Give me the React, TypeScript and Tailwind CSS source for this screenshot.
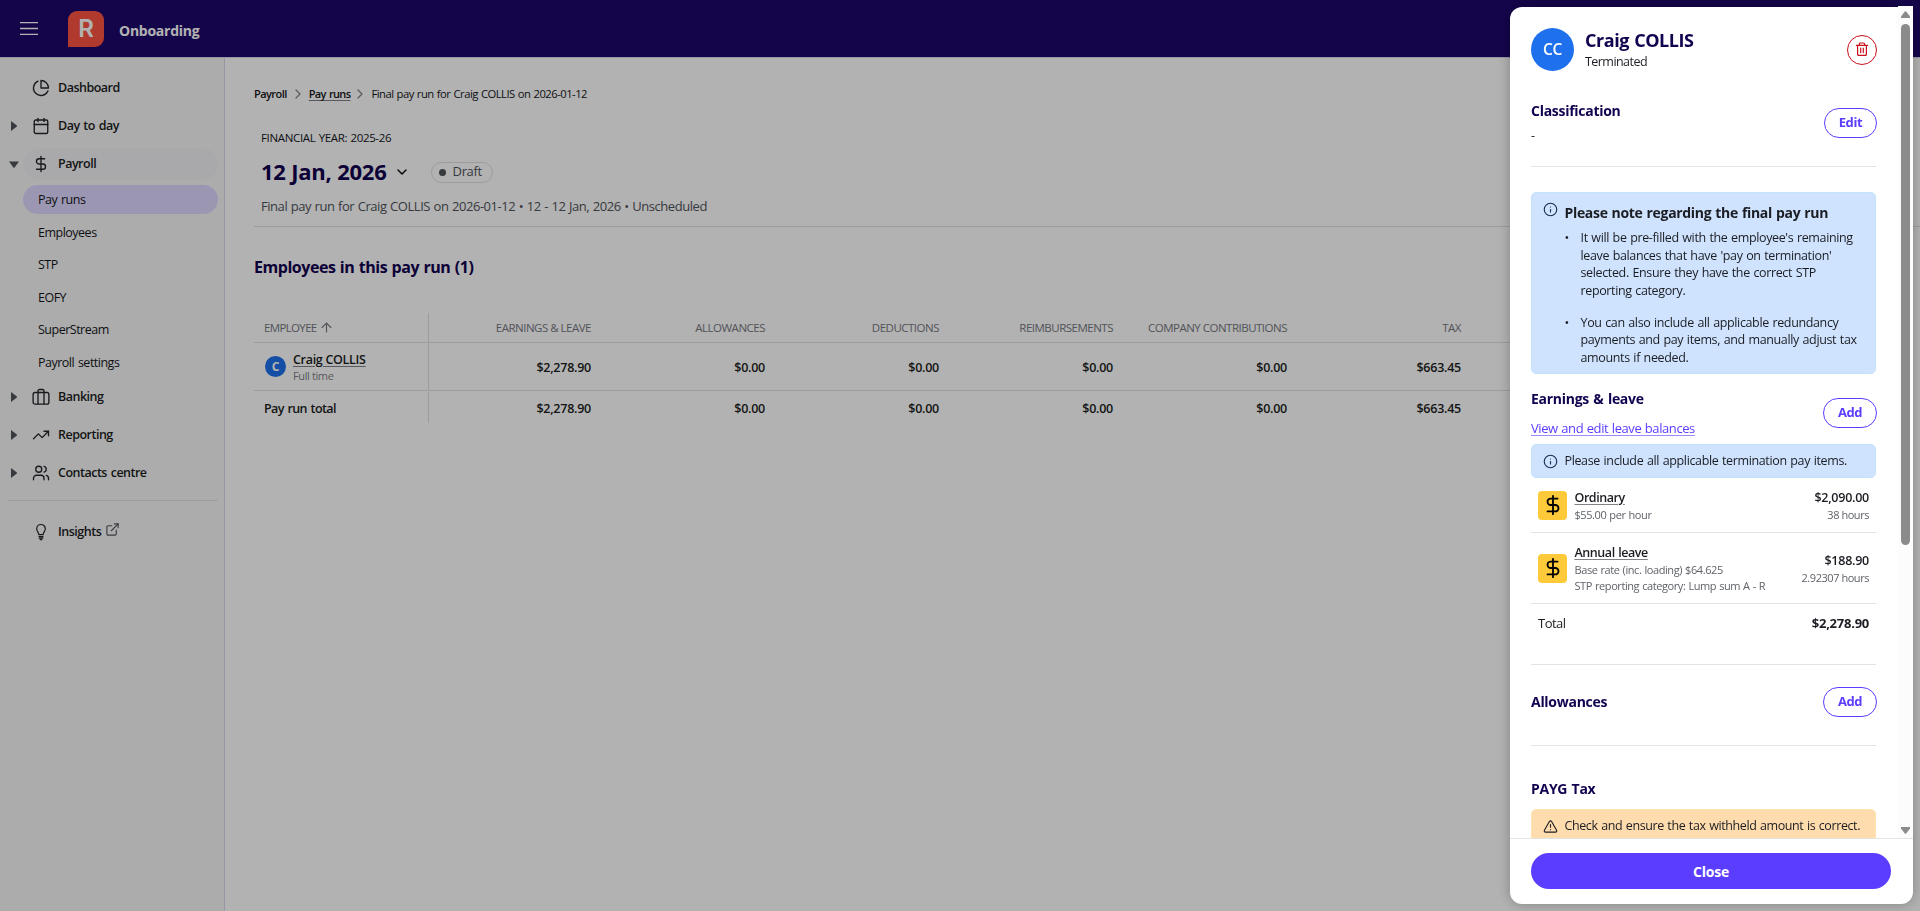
import type { ReactNode } from 'react';
import {
  ArrowUp,
  Calendar,
  ChevronDown,
  ChevronRight,
  DollarSign,
  ExternalLink,
  Info,
  TrendingUp,
  TriangleAlert,
  Users
} from 'lucide-react';

const PieIcon = () => (
  <svg viewBox="0 0 24 24" className="size-[18px]" fill="none" stroke="currentColor" strokeWidth={1.8} strokeLinecap="round" strokeLinejoin="round">
    <path d="M21.21 15.89A10 10 0 1 1 8 2.83" />
    <path d="M22 12A10 10 0 0 0 12 2v10z" />
  </svg>
);

const BankIcon = () => (
  <svg viewBox="0 0 24 24" className="size-[18px]" fill="none" stroke="currentColor" strokeWidth={1.8} strokeLinejoin="round">
    <rect x="1.5" y="6" width="21" height="15.5" rx="2.5" />
    <path d="M8 21.5V4a2 2 0 0 1 2-2h4a2 2 0 0 1 2 2v17.5" />
  </svg>
);

const BulbIcon = () => (
  <svg viewBox="0 0 18 18" className="size-[18px]" fill="none" stroke="currentColor" strokeWidth={1.2} strokeLinecap="round" strokeLinejoin="round">
    <path d="M6.9 11.7C6.9 9.6 4.7 8.6 4.7 5.8a4.3 4.3 0 0 1 8.6 0c0 2.8-2.2 3.8-2.2 5.9z" />
    <path d="M7 13.6h4M7.2 15.2h3.6M8.2 16.7h1.6" />
  </svg>
);

const TrashIcon = () => (
  <svg viewBox="0 0 14 14" className="mb-[2px] size-[14px]" fill="none" stroke="currentColor" strokeWidth={1.2} strokeLinecap="round" strokeLinejoin="round">
    <path d="M1.4 3.4h11.2M4.4 3.2V2a1 1 0 0 1 1-1h3.2a1 1 0 0 1 1 1v1.2M2.6 3.4v8.8a1.1 1.1 0 0 0 1.1 1.1h6.6a1.1 1.1 0 0 0 1.1-1.1V3.4M5.7 6.2v4.4M8.3 6.2v4.4" />
  </svg>
);

const payrollLinks = ['Pay runs', 'Employees', 'STP', 'EOFY', 'SuperStream', 'Payroll settings'];

const columns = [
  { label: 'Earnings & leave', value: '$2,278.90' },
  { label: 'Allowances', value: '$0.00' },
  { label: 'Deductions', value: '$0.00' },
  { label: 'Reimbursements', value: '$0.00' },
  { label: 'Company contributions', value: '$0.00' },
  { label: 'Tax', value: '$663.45' }
];

const notes = [
  [
    "It will be pre-filled with the employee's remaining",
    "leave balances that have 'pay on termination'",
    'selected. Ensure they have the correct STP',
    'reporting category.'
  ],
  [
    'You can also include all applicable redundancy',
    'payments and pay items, and manually adjust tax',
    'amounts if needed.'
  ]
];

const Caret = ({ open }: { open?: boolean }) => (
  <svg viewBox="0 0 10 10" className="size-[10px] text-[#50535a]" fill="currentColor">
    {open ? <path d="M0 2.5h10L5.6 8.4a.8.8 0 0 1-1.2 0z" /> : <path d="M2 0v10l5.6-4.3a.9.9 0 0 0 0-1.4z" />}
  </svg>
);

interface NavItemProps {
  icon: ReactNode;
  label: string;
  caret?: boolean;
  open?: boolean;
  children?: ReactNode;
}

const NavItem = ({ icon, label, caret, open, children }: NavItemProps) => (
  <div className="flex h-8 items-center">
    <div className="flex w-[23px] justify-center pl-[5px]">{caret && <Caret open={open} />}</div>
    <div className={`flex h-8 w-[195px] items-center rounded-full pl-[9px] ${open ? 'bg-[#f2f2f5]' : ''}`}>
      <span className="flex w-[26px] text-[#23262b]">{icon}</span>
      <span className="pt-px text-[12.5px] font-semibold tracking-[-0.5px] text-[#1b1d22] [word-spacing:1px]">{label}</span>
      {children}
    </div>
  </div>
);

const Sidebar = () => (
  <aside className="h-[853px] w-[225px] shrink-0 border-r border-[#dbd8ea] bg-[#f7f7f8] pt-[14px]">
    <nav className="flex flex-col gap-[6px]">
      <NavItem icon={<PieIcon />} label="Dashboard" />
      <NavItem icon={<Calendar size={18} strokeWidth={1.8} />} label="Day to day" caret />
      <NavItem icon={<DollarSign size={18} strokeWidth={1.8} />} label="Payroll" caret open />
    </nav>
    <ul className="mt-[5px] ml-[23px] flex w-[195px] flex-col gap-[3.5px]">
      {payrollLinks.map((link, i) => (
        <li
          key={link}
          className={`flex h-[29px] items-center rounded-full pt-[2px] pl-[15px] text-[12.5px] tracking-[-0.5px] text-[#14161a] [word-spacing:1px] ${i === 0 ? 'bg-[#dfd9ff]' : ''}`}
        >
          {link}
        </li>
      ))}
    </ul>
    <nav className="mt-1 flex flex-col gap-[6px]">
      <NavItem icon={<BankIcon />} label="Banking" caret />
      <NavItem icon={<TrendingUp size={18} strokeWidth={1.8} />} label="Reporting" caret />
      <NavItem icon={<Users size={18} strokeWidth={1.8} />} label="Contacts centre" caret />
    </nav>
    <div className="mt-[11px] mr-[6px] mb-[15px] ml-[7px] border-t border-[#e3e3e6]" />
    <NavItem icon={<BulbIcon />} label="Insights">
      <ExternalLink size={15} strokeWidth={1.8} className="mb-1 ml-1 text-[#50535a]" />
    </NavItem>
  </aside>
);

const AmountCell = ({ children }: { children: ReactNode }) => (
  <div className="w-[174px] pt-[3px] pr-[12px] text-right text-[12.5px] font-semibold tracking-[-0.25px]">{children}</div>
);

const PayRunTable = () => (
  <div className="mt-9 w-[1560px] text-[12.5px] text-[#1b1d22]">
    <div className="flex h-[30px] items-center border-b border-[#e0e0e3] text-[11.5px] tracking-[-0.5px] text-[#76787f] uppercase">
      <div className="flex h-full w-[175px] items-center gap-[2px] border-r border-[#e0e0e3] pl-[10px]">
        <span className="pt-px tracking-[-0.65px]">Employee</span>
        <ArrowUp size={15} strokeWidth={1.8} />
      </div>
      {columns.map((col) => (
        <div key={col.label} className="w-[174px] pt-px pr-[12px] text-right">{col.label}</div>
      ))}
    </div>
    <div className="flex h-12 items-center border-b border-[#e0e0e3]">
      <div className="flex h-full w-[175px] items-center gap-[7px] border-r border-[#e0e0e3] pl-[11px]">
        <span className="flex size-[21px] items-center justify-center rounded-full bg-[#1f70ec] text-[12px] font-bold text-white">C</span>
        <div className="pt-[3px] leading-[16px]">
          <div className="font-semibold tracking-[-0.3px] underline decoration-[#808288] underline-offset-2">Craig COLLIS</div>
          <div className="text-[11px] tracking-[-0.38px] text-[#808288]">Full time</div>
        </div>
      </div>
      {columns.map((col) => (
        <AmountCell key={col.label}>{col.value}</AmountCell>
      ))}
    </div>
    <div className="flex h-8 items-center pt-px">
      <div className="flex h-full w-[175px] items-center border-r border-[#e0e0e3] pt-[3px] pl-[10px] font-semibold tracking-[-0.6px] [word-spacing:1px]">
        Pay run total
      </div>
      {columns.map((col) => (
        <AmountCell key={col.label}>{col.value}</AmountCell>
      ))}
    </div>
  </div>
);

const SectionTitle = ({ children }: { children: ReactNode }) => (
  <h3 className="text-[14px] leading-5 font-bold tracking-[-0.28px] text-[#12024f] [word-spacing:1px]">{children}</h3>
);

const OutlineButton = ({ label, className }: { label: string; className: string }) => (
  <button className={`h-[30px] shrink-0 rounded-full border border-[#5a3dff] text-[13px] font-bold tracking-[-0.4px] text-[#5a3dff] ${className}`}>
    {label}
  </button>
);

interface PayItemProps {
  name: string;
  lines: string[];
  amount: string;
  hours: string;
  className: string;
}

const PayItem = ({ name, lines, amount, hours, className }: PayItemProps) => (
  <div className={`flex items-center border-b border-[#e3e3e6] px-[7px] text-[11px] leading-[15.5px] text-[#5f6269] ${className}`}>
    <span className="flex size-[29px] shrink-0 items-center justify-center rounded bg-[#ffca3a] text-black">
      <DollarSign size={22} />
    </span>
    <div className="ml-[7.5px] grow pt-px tracking-[-0.42px] [word-spacing:0.6px]">
      <div className="text-[12.5px] leading-[18px] font-semibold tracking-[-0.43px] text-[#1b1d22] underline decoration-[#808288] underline-offset-2">{name}</div>
      {lines.map((line) => (
        <div key={line}>{line}</div>
      ))}
    </div>
    <div className="pt-[2px] text-right tracking-[-0.45px]">
      <div className="text-[12.5px] leading-[18px] font-semibold tracking-[-0.25px] text-[#1b1d22]">{amount}</div>
      <div>{hours}</div>
    </div>
  </div>
);

const Drawer = () => (
  <div className="fixed top-[7px] right-[7px] bottom-[7px] flex w-[403px] flex-col rounded-xl bg-white text-[#1b1d22] shadow-[0_0_14px_rgba(0,0,0,0.28)]">
    <div className="flex h-[831px] shrink-0">
      <div className="h-full w-[388px] overflow-hidden rounded-tl-xl pt-[21px] pr-[22px] pl-[21px] whitespace-nowrap">
        <div className="flex h-[43px] items-center">
          <span className="flex size-[43px] items-center justify-center rounded-full bg-[#1f70ec] text-[15.5px] font-semibold tracking-[-0.4px] text-white">CC</span>
          <div className="ml-[11px] grow pb-px">
            <div className="text-[18px] leading-[25px] font-bold tracking-[-0.45px] text-[#12024f] [word-spacing:1px]">Craig COLLIS</div>
            <div className="text-[12.5px] leading-[18px] tracking-[-0.55px]">Terminated</div>
          </div>
          <button className="-mr-px flex size-[30px] items-center justify-center rounded-full border border-[#c8101c] text-[#c8101c]">
            <TrashIcon />
          </button>
        </div>

        <div className="mt-[30px] flex h-[66px] items-start justify-between border-b border-[#e3e3e6]">
          <div>
            <SectionTitle>Classification</SectionTitle>
            <p className="mt-[5px] text-[12.5px] leading-5">-</p>
          </div>
          <OutlineButton label="Edit" className="mt-[7px] -mr-px w-[53px]" />
        </div>

        <div className="mt-[25px] flex h-[182px] rounded-[5px] border border-[#c3e3fb] bg-[#cfe3ff] pt-[10px] pl-[11px]">
          <Info size={15} strokeWidth={1.8} className="-mt-px shrink-0 text-[#16324f]" />
          <div className="ml-[6.5px] text-[12.5px] leading-[17.67px] tracking-[-0.36px] [word-spacing:0.7px]">
            <h4 className="text-[14px] leading-5 font-bold tracking-[-0.32px]">Please note regarding the final pay run</h4>
            <ul className="mt-[6px] flex flex-col gap-[14px]">
              {notes.map((note) => (
                <li key={note[0]} className="flex">
                  <span className="w-4">•</span>
                  <div>
                    {note.map((line) => (
                      <div key={line}>{line}</div>
                    ))}
                  </div>
                </li>
              ))}
            </ul>
          </div>
        </div>

        <div className="mt-[15px] flex h-[55px] items-start justify-between">
          <div>
            <SectionTitle>Earnings & leave</SectionTitle>
            <a className="mt-[9px] block text-[13px] leading-5 tracking-[-0.42px] text-[#5a3dff] underline decoration-[#9c8aff] underline-offset-2 [word-spacing:0.6px]">
              View and edit leave balances
            </a>
          </div>
          <OutlineButton label="Add" className="mt-[9px] -mr-px w-[54px]" />
        </div>
        <div className="flex h-[34px] items-center rounded-[5px] border border-[#c3e3fb] bg-[#cfe3ff] pl-[11px] text-[12.5px] tracking-[-0.36px] [word-spacing:0.7px]">
          <Info size={15} strokeWidth={1.8} className="mr-[6.5px] text-[#16324f]" />
          <span className="pt-px">Please include all applicable termination pay items.</span>
        </div>

        <PayItem name="Ordinary" lines={['$55.00 per hour']} amount="$2,090.00" hours="38 hours" className="h-[55px]" />
        <PayItem
          name="Annual leave"
          lines={['Base rate (inc. loading) $64.625', 'STP reporting category: Lump sum A - R']}
          amount="$188.90"
          hours="2.92307 hours"
          className="h-[71px]"
        />
        <div className="flex h-[61px] justify-between border-b border-[#e3e3e6] px-[7px] text-[13px] leading-[39px]">
          <span className="tracking-[-0.5px]">Total</span>
          <span className="font-bold tracking-[-0.25px]">$2,278.90</span>
        </div>

        <div className="flex h-[81px] justify-between border-b border-[#e3e3e6] pt-[22px]">
          <div className="pt-[5px]">
            <SectionTitle>Allowances</SectionTitle>
          </div>
          <OutlineButton label="Add" className="-mr-px w-[54px]" />
        </div>

        <div className="mt-[33px]">
          <SectionTitle>PAYG Tax</SectionTitle>
        </div>
        <div className="mt-[10px] flex h-[34px] items-center rounded-[5px] border border-[#ffe2ad] bg-[#ffdcae] pl-[11px] text-[12.5px] tracking-[-0.4px] [word-spacing:0.7px]">
          <TriangleAlert size={15} strokeWidth={1.8} className="mr-[6.5px]" />
          <span className="pt-px">Check and ensure the tax withheld amount is correct.</span>
        </div>
      </div>
      {/* scrollbar */}
      <div className="-mt-px flex w-[15px] flex-col items-center bg-[#fcfcfc] pt-[5px] text-[#8b8b8b]">
        <svg viewBox="0 0 9 7" className="h-[7px] w-[9px]" fill="currentColor">
          <path d="M3.8.5a1 1 0 0 1 1.4 0L9 5.5V7H0V5.5z" />
        </svg>
        <div className="mt-[6px] h-[521px] w-[9px] rounded-full bg-[#8b8b8b]" />
        <svg viewBox="0 0 9 7" className="mt-auto mb-1 h-[7px] w-[9px]" fill="currentColor">
          <path d="M3.8 6.5a1 1 0 0 0 1.4 0L9 1.5V0H0v1.5z" />
        </svg>
      </div>
    </div>
    <div className="grow border-t border-[#e3e3e6] px-[21px] pt-[14px]">
      <button className="h-9 w-[360px] rounded-full bg-[#5a3dff] pt-px text-[14px] font-bold tracking-[-0.2px] text-white">Close</button>
    </div>
  </div>
);

export default function App() {
  return (
    <div className="h-[911px] overflow-hidden bg-white font-['Open_Sans',sans-serif]">
      <header className="flex h-[58px] items-center border-b border-[#dbd8ea] bg-[#1e076b] pl-5 text-white">
        <svg viewBox="0 0 18 13" className="h-[13px] w-[18px]" stroke="currentColor" strokeWidth={1.3}>
          <path d="M0 .7h18M0 6.5h18M0 12.3h18" />
        </svg>
        <span className="ml-[30px] flex size-9 items-center justify-center rounded-[9px] rounded-bl-none bg-[#fd5443] font-['Inter',sans-serif] text-[24px] leading-none font-semibold">
          R
        </span>
        <span className="ml-[15px] pt-[3px] text-[14px] font-bold tracking-[-0.25px]">Onboarding</span>
      </header>
      <div className="flex">
        <Sidebar />
        <main className="grow overflow-hidden pl-[29px] whitespace-nowrap">
          <div className="mt-[26px] flex h-5 items-center text-[11.25px] text-[#14161a]">
            <span className="pt-px text-[11px] font-semibold tracking-[-0.57px]">Payroll</span>
            <ChevronRight size={16} strokeWidth={1.8} className="mx-[3px] text-[#808288]" />
            <span className="pt-px text-[11px] font-semibold tracking-[-0.65px] underline decoration-[#808288] underline-offset-2 [word-spacing:1px]">Pay runs</span>
            <ChevronRight size={16} strokeWidth={1.8} className="mr-[3px] ml-[2px] text-[#808288]" />
            <span className="pt-px tracking-[-0.52px] [word-spacing:0.7px]">Final pay run for Craig COLLIS on 2026-01-12</span>
          </div>
          <div className="mt-6 border-b border-[#e0e0e3] pl-[7px]">
            <div className="text-[11.5px] leading-5 tracking-[-0.35px] text-[#14161a] uppercase [word-spacing:0.7px]">Financial year: 2025-26</div>
            <div className="mt-2 flex h-8 items-center">
              <h1 className="pb-px text-[22px] font-bold tracking-[-0.22px] text-[#12024f]">12 Jan, 2026</h1>
              <ChevronDown size={16} className="ml-[7px]" />
              <span className="ml-[21px] flex h-[21px] items-center rounded-full border border-[#e0e0e3] pr-[10px] pl-[7px] text-[13px] tracking-[-0.35px] text-[#50535a]">
                <span className="mr-[7px] size-[7px] rounded-full bg-[#50535a]" />
                Draft
              </span>
            </div>
            <p className="mt-2 h-[30px] text-[13px] leading-5 tracking-[-0.45px] text-[#50535a] [word-spacing:0.6px]">
              Final pay run for Craig COLLIS on 2026-01-12 • 12 - 12 Jan, 2026 • Unscheduled
            </p>
          </div>
          <h2 className="mt-[30px] text-[16px] leading-5 font-bold tracking-[-0.46px] text-[#12024f] [word-spacing:0.7px]">Employees in this pay run (1)</h2>
          <PayRunTable />
        </main>
      </div>
      <div className="fixed inset-0 bg-black/30" />
      <Drawer />
    </div>
  );
}
